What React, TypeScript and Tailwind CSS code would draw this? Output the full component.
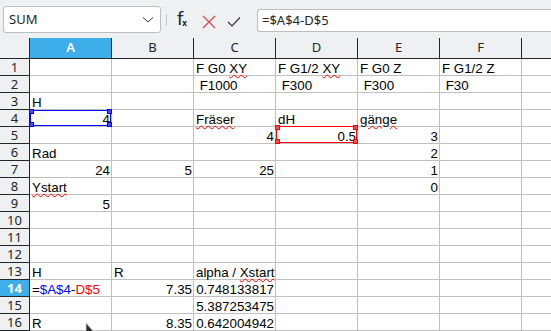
import type { ReactNode } from "react";

type Cell = { v: ReactNode; r?: boolean };

const COLS = ["A", "B", "C", "D", "E", "F", "G"];

// wavy spell-check underline
const W = ({ children }: { children: ReactNode }) => (
  <span className="underline decoration-wavy decoration-[#ff0000] decoration-1">{children}</span>
);

const DATA: Record<number, Record<string, Cell>> = {
  1: {
    C: { v: <>F G0 <W>XY</W></> },
    D: { v: <>F G1/2 <W>XY</W></> },
    E: { v: "F G0 Z" },
    F: { v: "F G1/2 Z" },
  },
  2: { C: { v: " F1000" }, D: { v: " F300" }, E: { v: " F300" }, F: { v: " F30" } },
  3: { A: { v: "H" } },
  4: { A: { v: "4", r: true }, C: { v: <W>Fräser</W> }, D: { v: "dH" }, E: { v: <W>gänge</W> } },
  5: { C: { v: "4", r: true }, D: { v: "0.5", r: true }, E: { v: "3", r: true } },
  6: { A: { v: "Rad" }, E: { v: "2", r: true } },
  7: { A: { v: "24", r: true }, B: { v: "5", r: true }, C: { v: "25", r: true }, E: { v: "1", r: true } },
  8: { A: { v: <W>Ystart</W> }, E: { v: "0", r: true } },
  9: { A: { v: "5", r: true } },
  13: { A: { v: "H" }, B: { v: "R" }, C: { v: <>alpha / <W>Xstart</W></> } },
  14: {
    A: {
      v: (
        <>
          =<span className="text-[#0000ff]">$A$4</span>-<span className="text-[#ff0000]">D$5</span>
        </>
      ),
    },
    B: { v: "7.35", r: true },
    C: { v: "0.748133817", r: true },
  },
  15: { C: { v: "5.387253475", r: true } },
  16: { A: { v: "R" }, B: { v: "8.35", r: true }, C: { v: "0.642004942", r: true } },
};

const Handles = ({ color }: { color: string }) => (
  <>
    <span className={`absolute -left-[2px] -top-[2px] w-[5px] h-[5px] ${color}`} />
    <span className={`absolute -right-[2px] -top-[2px] w-[5px] h-[5px] ${color}`} />
    <span className={`absolute -left-[2px] -bottom-[2px] w-[5px] h-[5px] ${color}`} />
    <span className={`absolute -right-[2px] -bottom-[2px] w-[5px] h-[5px] ${color}`} />
  </>
);

const Toolbar = () => (
  <div className="h-[38px] bg-[#eff0f1] flex items-start font-['Noto_Sans',sans-serif] text-[13px] text-[#232629]">
    <div className="mt-[6px] ml-[3px] w-[158px] h-[27px] bg-white border border-[#bcbebf] rounded-[3px] flex items-center pl-[5px] pr-[5px]">
      <span className="flex-1">SUM</span>
      <svg width="12" height="8" viewBox="0 0 12 8" className="mr-[1px]">
        <path d="M1 1.5 L6 6 L11 1.5" fill="none" stroke="#31363b" strokeWidth="1" />
      </svg>
    </div>
    <div className="mt-[14px] ml-[5px] w-px h-[12px] bg-[#c4c6c8]" />
    <div className="ml-[10px] mt-[10px] w-[16px] h-[18px] flex items-end leading-none">
      <span className="text-[18px] font-['DejaVu_Sans',sans-serif]">f</span>
      <span className="text-[8px] font-bold -ml-px mb-[1px]">x</span>
    </div>
    <svg width="14" height="14" viewBox="0 0 14 14" className="ml-[9px] mt-[15px]">
      <path d="M1 1 L13 13 M13 1 L1 13" stroke="#da4453" strokeWidth="1.2" />
    </svg>
    <svg width="14" height="12" viewBox="0 0 14 12" className="ml-[11px] mt-[16px]">
      <path d="M1 6 L5 10 L13 1.5" fill="none" stroke="#31363b" strokeWidth="1.2" />
    </svg>
    <div className="mt-[9px] ml-[16px] flex-1 h-[23px] bg-white border border-r-0 border-[#bcbebf] rounded-l-[3px] flex items-center pl-[4px]">
      =$A$4-D$5
    </div>
  </div>
);

export default function App() {
  return (
    <div className="w-[551px] h-[331px] overflow-hidden bg-white relative">
      <Toolbar />
      {/* column headers */}
      <div className="flex h-[21px] bg-[#eff0f1] border-b border-[#232629] font-['Noto_Sans',sans-serif] text-[13px] leading-[19px] text-[#232629]">
        <div className="w-[30px] shrink-0 border-r border-[#232629]" />
        {COLS.map((c) => (
          <div
            key={c}
            className={`w-[82px] shrink-0 border-r border-[#232629] text-center ${
              c === "A" ? "bg-[#3daee9] text-white font-semibold" : ""
            }`}
          >
            {c === "G" ? "" : c}
          </div>
        ))}
      </div>
      {/* rows */}
      {Array.from({ length: 16 }).map((_, i) => {
        const row = i + 1;
        const cells = DATA[row] || {};
        return (
          <div key={row} className="flex h-[17px]">
            <div
              className={`w-[30px] shrink-0 border-r border-b border-[#232629] text-center font-['Noto_Sans',sans-serif] text-[13px] leading-[15px] pt-px ${
                row === 14 ? "bg-[#3daee9] text-white font-bold" : "bg-[#eff0f1] text-[#232629]"
              }`}
            >
              {row}
            </div>
            {COLS.map((c) => {
              const cell = cells[c];
              const cursor = row === 4 && c === "A";
              const ref = row === 5 && c === "D";
              return (
                <div
                  key={c}
                  className={`relative w-[82px] shrink-0 border-r border-b border-[#c0c0c0] font-['Liberation_Sans',Arial,sans-serif] text-[13.33px] leading-[15px] pt-[2px] whitespace-pre text-black ${
                    cell?.r ? "text-right pr-[1px]" : "pl-[2px]"
                  }`}
                >
                  {cell?.v}
                  {cursor && (
                    <div className="absolute left-0 top-0 right-0 bottom-0 border border-[#0000ff]">
                      <Handles color="bg-[#4a4aff] border border-[#0000ff]" />
                    </div>
                  )}
                  {ref && (
                    <div className="absolute left-0 -top-px right-0 bottom-0 border border-[#ff0000]">
                      <Handles color="bg-[#ff4a4a] border border-[#ff0000]" />
                    </div>
                  )}
                </div>
              );
            })}
          </div>
        );
      })}
      {/* mouse pointer */}
      <svg width="12" height="10" viewBox="0 0 12 10" className="absolute left-[85px] top-[322px]">
        <path d="M1 1 L1 14 L4.5 10.5 L9 10 Z" fill="#2a2a2a" stroke="#d0d0d0" strokeWidth="0.8" />
      </svg>
    </div>
  );
}
